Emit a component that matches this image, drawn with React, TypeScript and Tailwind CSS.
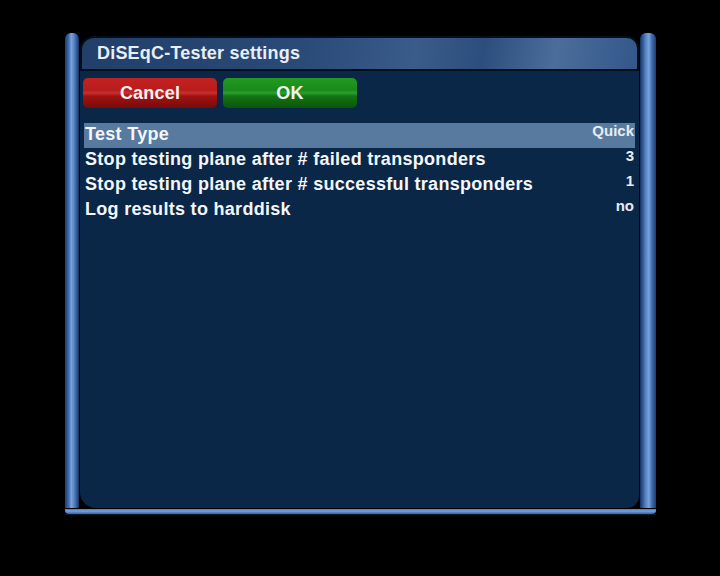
import React from 'react';

const rows = [
  { label: 'Test Type', value: 'Quick' },
  { label: 'Stop testing plane after # failed transponders', value: '3' },
  { label: 'Stop testing plane after # successful transponders', value: '1' },
  { label: 'Log results to harddisk', value: 'no' },
];

const font = { fontFamily: '"Liberation Sans", Arial, sans-serif' };

function Button({ label, tone }: { label: string; tone: 'red' | 'green' }) {
  const bg =
    tone === 'red'
      ? 'bg-[linear-gradient(180deg,#c42222_0%,#b81c1c_40%,#c83030_50%,#a01212_60%,#7a0a0a_100%)]'
      : 'bg-[linear-gradient(180deg,#229a22_0%,#1a8a1a_40%,#2aa02a_50%,#147414_60%,#0b560b_100%)]';
  return (
    <div
      className={`w-[134px] h-[30px] rounded-[5px] flex items-center justify-center text-[18px] font-bold text-[#f2f2f2] tracking-[0.2px] ${bg}`}
    >
      {label}
    </div>
  );
}

export default function App() {
  return (
    <div className="w-[720px] h-[576px] bg-black pt-[33px] pl-[65px]" style={font}>
      <div className="w-[591px] h-[482px] flex flex-col">
        <div className="flex flex-1 min-h-0">
          {/* left tube */}
          <div className="w-[14px] rounded-t-[6px] bg-[linear-gradient(90deg,#1d3d70_0%,#3f69a8_25%,#7aa3dc_45%,#5583c2_65%,#274d88_90%,#15305a_100%)]" />
          <div className="w-[1px] bg-black" />
          {/* center */}
          <div className="flex-1 flex flex-col pt-[3px]">
            <div className="h-[35px] rounded-tl-[14px] rounded-tr-[12px] border-2 border-[#050d1a] bg-[linear-gradient(100deg,#213f68_0%,#2a4a78_40%,#3a5c8a_60%,#2c4e7e_72%,#4a6d9b_85%,#33578a_100%)] flex items-center pl-[15px]">
              <span className="text-[18px] font-bold text-[#e8eef6] tracking-[0.2px]">DiSEqC-Tester settings</span>
            </div>
            <div className="flex-1 bg-[#0a2748] rounded-bl-[16px] rounded-br-[12px] pt-[7px] pl-[3px]">
              <div className="flex gap-[6px]">
                <Button label="Cancel" tone="red" />
                <Button label="OK" tone="green" />
              </div>
              <div className="mt-[15px] ml-[1px] w-[551px] flex flex-col">
                {rows.map((r, i) => (
                  <div
                    key={r.label}
                    className={`h-[25px] flex justify-between ${i === 0 ? 'bg-[#587a9f]' : ''}`}
                  >
                    <span className="text-[18px] font-bold text-[#f4f6f9] tracking-[0.3px] leading-[23px] pl-[1px]">
                      {r.label}
                    </span>
                    <span className="text-[15px] font-bold text-[#e6ecf2] leading-[16px] pr-[1px]">
                      {r.value}
                    </span>
                  </div>
                ))}
              </div>
            </div>
          </div>
          <div className="w-[1px] bg-black" />
          {/* right tube */}
          <div className="w-[16px] rounded-t-[6px] bg-[linear-gradient(90deg,#15305a_0%,#274d88_12%,#5583c2_35%,#7aa3dc_55%,#3f69a8_75%,#1d3d70_100%)]" />
        </div>
        <div className="h-[1px] bg-black" />
        <div className="h-[5px] rounded-b-[4px] bg-[linear-gradient(180deg,#4c79b8_0%,#7aa3dc_40%,#3a639f_100%)]" />
        <div className="h-[1px] bg-[#0b1a30]" />
      </div>
    </div>
  );
}
